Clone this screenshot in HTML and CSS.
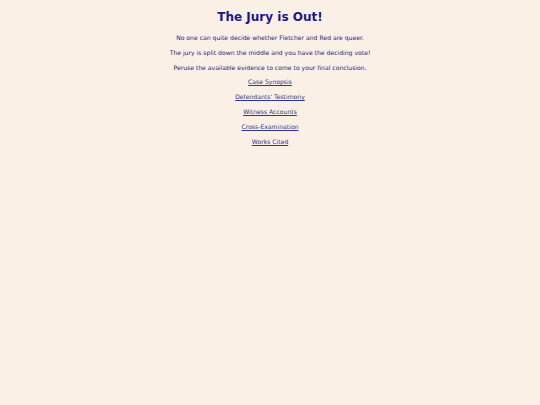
FILE: index.html
```html
<!DOCTYPE html>
<html>
<head>
<meta charset="utf-8">
<link rel="stylesheet" href="styles.css">
</head>
<body>
<main class="page">
  <h1 class="title">The Jury is Out!</h1>
  <p class="line">No one can quite decide whether Fletcher and Red are queer.</p>
  <p class="line">The jury is split down the middle and you have the deciding vote!</p>
  <p class="line">Peruse the available evidence to come to your final conclusion.</p>
  <p class="line"><a class="link" href="#">Case Synopsis</a></p>
  <p class="line"><a class="link" href="#">Defendants' Testimony</a></p>
  <p class="line"><a class="link" href="#">Witness Accounts</a></p>
  <p class="line"><a class="link" href="#">Cross-Examination</a></p>
  <p class="line"><a class="link" href="#">Works Cited</a></p>
</main>
</body>
</html>
```

FILE: styles.css
```css
html, body {
  margin: 0;
  padding: 0;
  background: #faf0e6;
}
body {
  font-family: "DejaVu Sans", sans-serif;
  color: #1c1c80;
}
.page {
  padding-top: 8px;
  text-align: center;
}
.title {
  margin: 0 0 5px 0;
  font-size: 12px;
  font-weight: bold;
  color: #1a1a8a;
  line-height: 18px;
}
.line {
  margin: 0;
  font-size: 6.1px;
  line-height: 14.8px;
}
.link {
  color: #333399;
}
```
